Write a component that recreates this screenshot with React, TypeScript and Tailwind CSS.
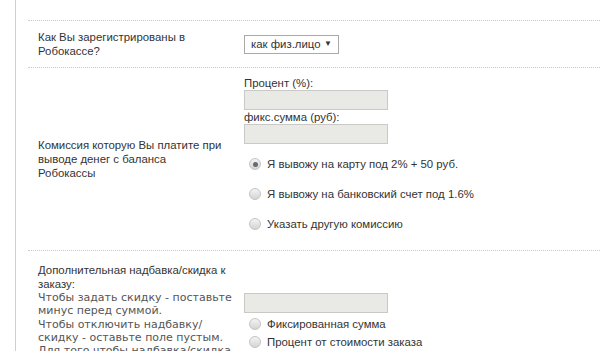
import React from "react";

function Radio({ checked }: { checked?: boolean }) {
  return (
    <span className="relative inline-block w-[12px] h-[12px] rounded-full border border-[#c4c4c4] bg-gradient-to-b from-[#f4f4f4] to-[#d4d4d4] shrink-0">
      {checked && (
        <span className="absolute left-[2.5px] top-[2.5px] w-[5px] h-[5px] rounded-full bg-[#6a6a6a]" />
      )}
    </span>
  );
}

function Field() {
  return <div className="w-[144px] h-[20px] border border-[#c9c9c5] bg-[#e9e9e5]" />;
}

export default function App() {
  const arial = { fontFamily: '"Liberation Sans", Arial, sans-serif' };
  return (
    <div className="w-[600px] h-[351px] overflow-hidden bg-white" style={arial}>
      <div className="ml-[15px] h-full border-l border-[#cfcfcf] pl-[12px] pt-[20px] text-[11.4px] leading-[14px] text-[#333]">
        {/* Row 1 */}
        <div className="flex items-center border-t border-dotted border-[#c8c8c8] h-[47px]">
          <div className="w-[216px] pl-[10px]">
            Как Вы зарегистрированы в<br />Робокассе?
          </div>
          <div className="flex items-center w-[95px] h-[19px] border border-[#a9a9a9] bg-white pl-[6px] pr-[6px] justify-between whitespace-nowrap">
            <span>как физ.лицо</span>
            <span className="text-[8px]">▼</span>
          </div>
        </div>
        {/* Row 2 */}
        <div className="flex items-center border-t border-dotted border-[#c8c8c8] h-[183px]">
          <div className="w-[216px] pl-[10px]">
            Комиссия которую Вы платите при
            <br />
            выводе денег с баланса
            <br />
            Робокассы
          </div>
          <div className="flex flex-col self-start pt-[8px]">
            <div className="h-[14px] whitespace-nowrap">Процент (%):</div>
            <Field />
            <div className="h-[14px] whitespace-nowrap">фикс.сумма (руб):</div>
            <Field />
            <div className="flex flex-col gap-[14px] mt-[12px] pl-[5px]">
              <label className="flex items-center gap-[6px] h-[16px] whitespace-nowrap">
                <Radio checked />
                <span>Я вывожу на карту под 2% + 50 руб.</span>
              </label>
              <label className="flex items-center gap-[6px] h-[16px] whitespace-nowrap">
                <Radio />
                <span>Я вывожу на банковский счет под 1.6%</span>
              </label>
              <label className="flex items-center gap-[6px] h-[16px] whitespace-nowrap">
                <Radio />
                <span>Указать другую комиссию</span>
              </label>
            </div>
          </div>
        </div>
        {/* Row 3 */}
        <div className="flex items-start border-t border-dotted border-[#c8c8c8]">
          <div className="w-[216px] pl-[10px] pr-[4px] pt-[13px]">
            <div className="leading-[13.5px]">
              Дополнительная надбавка/скидка к<br />заказу:
            </div>
            <div
              className="text-[11px] leading-[13.3px] text-[#555] whitespace-nowrap"
              style={{ fontFamily: '"DejaVu Sans", Verdana, sans-serif' }}
            >
              Чтобы задать скидку - поставьте
              <br />
              минус перед суммой.
              <br />
              Чтобы отключить надбавку/
              <br />
              скидку - оставьте поле пустым.
              <br />
              Для того чтобы надбавка/скидка
            </div>
          </div>
          <div className="flex flex-col pt-[42px]">
            <Field />
            <label className="flex items-center gap-[6px] h-[18px] mt-[2px] pl-[5px] whitespace-nowrap">
              <Radio />
              <span>Фиксированная сумма</span>
            </label>
            <label className="flex items-center gap-[6px] h-[18px] pl-[5px] whitespace-nowrap">
              <Radio />
              <span>Процент от стоимости заказа</span>
            </label>
          </div>
        </div>
      </div>
    </div>
  );
}
